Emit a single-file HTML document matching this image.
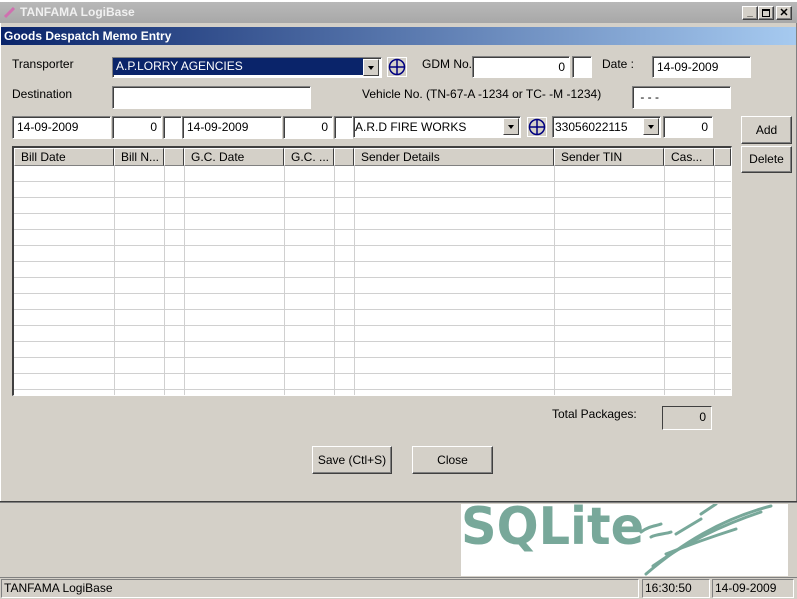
<!DOCTYPE html>
<html><head><meta charset="utf-8"><style>
*{box-sizing:border-box;margin:0;padding:0}
body{width:797px;height:599px;background:#d4d0c8;font-family:"Liberation Sans",sans-serif;font-size:12px;color:#000;position:relative;overflow:hidden}
.a{position:absolute}
.s{position:absolute;background:#fff;border-top:1px solid #808080;border-left:1px solid #808080;border-bottom:1px solid #fff;border-right:1px solid #fff;box-shadow:inset 1px 1px 0 #404040;line-height:18px;padding:0 4px;white-space:nowrap;overflow:hidden}
.r{text-align:right}
.b{position:absolute;background:#d4d0c8;border-top:1px solid #fff;border-left:1px solid #fff;border-right:1px solid #404040;border-bottom:1px solid #404040;box-shadow:inset -1px -1px 0 #808080;text-align:center}
.dd{position:absolute;width:16px;height:17px;background:#d4d0c8;border-top:1px solid #fff;border-left:1px solid #fff;border-right:1px solid #404040;border-bottom:1px solid #404040}
.dd:after{content:"";position:absolute;left:4px;top:6px;border-left:3px solid transparent;border-right:3px solid transparent;border-top:4px solid #000}
.pl{position:absolute;width:20px;height:20px}
.hd{position:absolute;top:148px;height:18px;background:#d4d0c8;border-top:1px solid #fff;border-left:1px solid #fff;border-right:1px solid #404040;border-bottom:1px solid #808080;line-height:16px;padding-left:6px;white-space:nowrap;overflow:hidden}
.vl{position:absolute;top:166px;width:1px;height:229px;background:#d0d0d0}
</style></head><body>
<div class="a" style="left:0;top:0;width:797px;height:2px;background:#fff"></div>
<div class="a" style="left:0;top:2px;width:797px;height:21px;background:linear-gradient(#b8b8b8,#a8a8a8)"></div>
<svg class="a" style="left:4px;top:6px" width="12" height="12"><path d="M1 11 L10 2" stroke="#d070b0" stroke-width="3"/></svg>
<div class="a" style="left:20px;top:5px;font-weight:bold;color:#f0f0f0;font-size:12px">TANFAMA LogiBase</div>
<div class="b" style="left:742px;top:6px;width:16px;height:14px;font-size:10px;line-height:11px;font-weight:bold">_</div>
<div class="b" style="left:758px;top:6px;width:16px;height:14px"><div class="a" style="left:3px;top:2px;width:8px;height:8px;border:1px solid #000;border-top-width:2px"></div></div>
<div class="b" style="left:776px;top:6px;width:16px;height:14px;font-size:11px;line-height:12px;font-weight:bold">✕</div>
<div class="a" style="left:0;top:23px;width:797px;height:479px;border-left:1px solid #fff;border-right:1px solid #808080"></div>
<div class="a" style="left:1px;top:27px;width:795px;height:18px;background:linear-gradient(90deg,#0a246a,#a6caf0)"></div>
<div class="a" style="left:4px;top:29px;color:#fff;font-weight:bold;font-size:12px">Goods Despatch Memo Entry</div>

<div class="a" style="left:12px;top:57px">Transporter</div>
<div class="s" style="left:112px;top:57px;width:270px;height:21px;padding:0"><div style="background:#0a246a;color:#fff;height:17px;width:250px;padding-left:3px;line-height:17px">A.P.LORRY AGENCIES</div></div>
<div class="dd" style="left:363px;top:59px"></div>
<svg class="pl" style="left:387px;top:57px" viewBox="0 0 20 20"><rect x="0.5" y="0.5" width="19" height="19" fill="#d4d0c8" stroke="#fff"/><circle cx="10" cy="10" r="7.5" fill="none" stroke="#000080" stroke-width="1.5"/><path d="M10 3v14M3 10h14" stroke="#000080" stroke-width="1.5"/></svg>
<div class="a" style="left:422px;top:57px">GDM No.</div>
<div class="s r" style="left:472px;top:56px;width:98px;height:22px;line-height:20px">0</div>
<div class="s" style="left:572px;top:56px;width:20px;height:22px"></div>
<div class="a" style="left:602px;top:57px">Date :</div>
<div class="s" style="left:652px;top:56px;width:99px;height:22px;line-height:20px">14-09-2009</div>

<div class="a" style="left:12px;top:87px">Destination</div>
<div class="s" style="left:112px;top:86px;width:199px;height:23px"></div>
<div class="a" style="left:362px;top:87px">Vehicle No. (TN-67-A -1234 or TC-  -M -1234)</div>
<div class="s" style="left:632px;top:86px;width:99px;height:23px;line-height:20px">&nbsp;- - -</div>

<div class="s" style="left:12px;top:116px;width:99px;height:23px;line-height:20px">14-09-2009</div>
<div class="s r" style="left:112px;top:116px;width:50px;height:23px;line-height:20px">0</div>
<div class="s" style="left:163px;top:116px;width:19px;height:23px"></div>
<div class="s" style="left:182px;top:116px;width:100px;height:23px;line-height:20px">14-09-2009</div>
<div class="s r" style="left:283px;top:116px;width:50px;height:23px;line-height:20px">0</div>
<div class="s" style="left:334px;top:116px;width:19px;height:23px"></div>
<div class="s" style="left:353px;top:116px;width:168px;height:22px;line-height:20px;padding-left:1px">A.R.D FIRE WORKS</div>
<div class="dd" style="left:503px;top:118px"></div>
<svg class="pl" style="left:527px;top:117px" viewBox="0 0 20 20"><rect x="0.5" y="0.5" width="19" height="19" fill="#d4d0c8" stroke="#fff"/><circle cx="10" cy="10" r="7.5" fill="none" stroke="#000080" stroke-width="1.5"/><path d="M10 3v14M3 10h14" stroke="#000080" stroke-width="1.5"/></svg>
<div class="s" style="left:552px;top:116px;width:109px;height:22px;line-height:20px;padding-left:2px">33056022115</div>
<div class="dd" style="left:643px;top:118px"></div>
<div class="s r" style="left:663px;top:116px;width:50px;height:22px;line-height:20px">0</div>
<div class="b" style="left:741px;top:116px;width:51px;height:28px;line-height:26px">Add</div>
<div class="b" style="left:741px;top:146px;width:51px;height:27px;line-height:25px">Delete</div>

<div class="a" style="left:12px;top:146px;width:720px;height:250px;background:#fff;border-top:2px solid #404040;border-left:2px solid #404040;border-bottom:1px solid #fff;border-right:1px solid #fff"></div>
<div class="a" style="left:14px;top:166px;width:717px;height:229px;background-image:repeating-linear-gradient(180deg,transparent 0,transparent 15px,#d0d0d0 15px,#d0d0d0 16px)"></div>
<div class="vl" style="left:114px"></div><div class="vl" style="left:164px"></div><div class="vl" style="left:184px"></div><div class="vl" style="left:284px"></div><div class="vl" style="left:334px"></div><div class="vl" style="left:354px"></div><div class="vl" style="left:554px"></div><div class="vl" style="left:664px"></div><div class="vl" style="left:714px"></div>
<div class="hd" style="left:14px;width:100px">Bill Date</div>
<div class="hd" style="left:114px;width:50px">Bill N...</div>
<div class="hd" style="left:164px;width:20px"></div>
<div class="hd" style="left:184px;width:100px">G.C. Date</div>
<div class="hd" style="left:284px;width:50px">G.C. ...</div>
<div class="hd" style="left:334px;width:20px"></div>
<div class="hd" style="left:354px;width:200px">Sender Details</div>
<div class="hd" style="left:554px;width:110px">Sender TIN</div>
<div class="hd" style="left:664px;width:50px">Cas...</div>
<div class="hd" style="left:714px;width:17px"></div>

<div class="a" style="left:552px;top:407px">Total Packages:</div>
<div class="a r" style="left:662px;top:406px;width:50px;height:24px;border-top:1px solid #404040;border-left:1px solid #404040;border-bottom:1px solid #fff;border-right:1px solid #fff;line-height:21px;padding-right:5px;text-align:right">0</div>

<div class="b" style="left:312px;top:446px;width:80px;height:28px;line-height:26px">Save (Ctl+S)</div>
<div class="b" style="left:412px;top:446px;width:81px;height:28px;line-height:26px">Close</div>

<div class="a" style="left:0;top:501px;width:797px;height:2px;background:#404040;border-bottom:1px solid #808080"></div>
<div class="a" style="left:461px;top:504px;width:327px;height:72px;background:#fff;overflow:hidden">
<div class="a" style="left:0px;top:-12px;font-family:'DejaVu Sans',sans-serif;font-weight:bold;font-size:52px;color:#78a89a;line-height:70px;transform:scaleX(0.95);transform-origin:0 0">SQLite</div>
<svg class="a" style="left:0;top:0" width="327" height="72" viewBox="0 0 327 72"><g stroke="#78a89a" stroke-width="3" fill="none" stroke-linecap="round"><path d="M185 70 C220 40 260 15 310 2"/><path d="M192 62 C230 35 270 18 300 8"/><path d="M180 28 C188 22 195 22 200 20"/><path d="M205 50 C230 40 250 33 275 25"/><path d="M215 30 L240 15"/><path d="M240 10 L255 0"/><path d="M190 33 C195 30 205 30 210 28"/></g></svg>
</div>
<div class="a" style="left:0;top:577px;width:797px;height:1px;background:#808080"></div>
<div class="a" style="left:1px;top:579px;width:638px;height:19px;border-top:1px solid #808080;border-left:1px solid #808080;border-bottom:1px solid #fff;border-right:1px solid #fff;line-height:16px;padding-left:2px">TANFAMA LogiBase</div>
<div class="a" style="left:642px;top:579px;width:68px;height:19px;border-top:1px solid #808080;border-left:1px solid #808080;border-bottom:1px solid #fff;border-right:1px solid #fff;line-height:16px;padding-left:2px">16:30:50</div>
<div class="a" style="left:712px;top:579px;width:82px;height:19px;border-top:1px solid #808080;border-left:1px solid #808080;border-bottom:1px solid #fff;border-right:1px solid #fff;line-height:16px;padding-left:2px">14-09-2009</div>
</body></html>
